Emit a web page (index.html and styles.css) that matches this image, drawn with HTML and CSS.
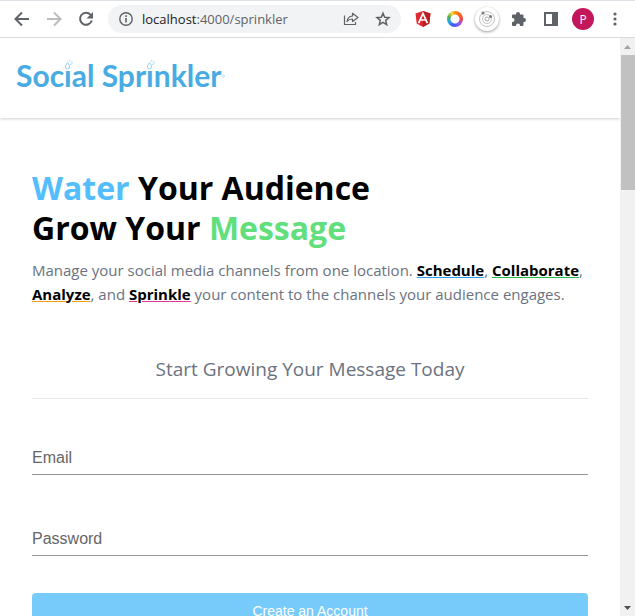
FILE: index.html
```html
<!DOCTYPE html>
<html lang="en">
<head>
  <meta charset="UTF-8">
  <meta name="viewport" content="width=device-width, initial-scale=1.0">
  <title>Social Sprinkler</title>
  <link rel="stylesheet" href="styles.css">
</head>
<body>
  <div class="toolbar">
    <button class="tool" type="button" aria-label="Back">
      <svg width="16" height="16" viewBox="0 0 16 16" fill="none" stroke="#5f6368" stroke-width="2"><path d="M15 8H2M8 1.5L1.5 8L8 14.5"/></svg>
    </button>
    <button class="tool" type="button" aria-label="Forward">
      <svg width="16" height="16" viewBox="0 0 16 16" fill="none" stroke="#babcbe" stroke-width="2"><path d="M1 8h13M8 1.5L14.5 8L8 14.5"/></svg>
    </button>
    <button class="tool" type="button" aria-label="Reload">
      <svg width="16" height="16" viewBox="0 0 16 16"><path d="M12.6 3.8A6 6 0 1 0 13.8 9.500" fill="none" stroke="#5f6368" stroke-width="2"/><path d="M15 1v6.500H8.500z" fill="#5f6368"/></svg>
    </button>
    <div class="address">
      <svg width="16" height="16" viewBox="0 0 16 16" fill="none" stroke="#5f6368"><circle cx="8" cy="8" r="6.200" stroke-width="1.400"/><path d="M8 7v4.500M8 4.300v1.600" stroke-width="1.600"/></svg>
      <span class="url"><span class="host">localhost</span>:4000/sprinkler</span>
      <button class="tool" type="button" aria-label="Share">
        <svg width="16" height="16" viewBox="0 0 16 16" fill="none" stroke="#5f6368" stroke-width="1.200"><path d="M1.500 4.500v9h11V11"/><path d="M4 10.500C4.500 7 6.500 5.300 9.500 5V2.300L15 6.500L9.500 10.500V8C7 8 5.300 8.800 4 10.500z" stroke-linejoin="round"/></svg>
      </button>
      <button class="tool" type="button" aria-label="Bookmark">
        <svg width="16" height="16" viewBox="0 0 16 16" fill="none" stroke="#5f6368" stroke-width="1.500"><path d="M8 2.200l1.700 4 4.300.4-3.300 2.800 1 4.300L8 11.400l-3.700 2.300 1-4.300L2 6.600l4.300-.4z"/></svg>
      </button>
    </div>
    <div class="extensions">
      <button class="tool" type="button" aria-label="Angular DevTools">
        <svg width="16" height="16" viewBox="0 0 16 16"><path d="M8 0l7.500 2.600-1.200 10L8 16l-6.300-3.400-1.200-10z" fill="#dd2c31"/><path d="M8 0l7.500 2.600-1.200 10L8 16z" fill="#b92025"/><path d="M3.600 12.200L8 2.500l4.400 9.700M5.600 9h4.800" fill="none" stroke="#fff" stroke-width="1.700"/></svg>
      </button>
      <button class="tool" type="button" aria-label="Color picker"><span class="color-ring"></span></button>
      <button class="tool round" type="button" aria-label="Orbit">
        <svg width="18" height="18" viewBox="0 0 18 18" fill="none" stroke="#c2c4c6"><circle cx="9" cy="9" r="7.500"/><circle cx="9" cy="9" r="4.500"/><circle cx="9" cy="9" r="2" stroke="#aaa"/><circle cx="5" cy="3" r="1.500" fill="#777" stroke="none"/><circle cx="12.500" cy="6.500" r="1.500" fill="#777" stroke="none"/></svg>
      </button>
      <button class="tool" type="button" aria-label="Extensions">
        <svg width="16" height="16" viewBox="0 0 16 16"><path d="M1 4.500Q1 3.500 2 3.500H5V3a2 2 0 0 1 4 0v.5h2.500q1 0 1 1V7h.5a2 2 0 0 1 0 4h-.5v3q0 1-1 1H9v-.5a1.800 1.800 0 0 0-4 0v.5H2q-1 0-1-1v-3h.5a1.800 1.800 0 0 0 0-4H1z" fill="#5f6368"/></svg>
      </button>
      <button class="tool" type="button" aria-label="Side panel">
        <svg width="16" height="16" viewBox="0 0 16 16"><path d="M1 1h14v14H1zM3 3v10h6V3z" fill="#5f6368" fill-rule="evenodd"/></svg>
      </button>
      <button class="avatar" type="button">P</button>
      <button class="tool" type="button" aria-label="Menu">
        <svg width="16" height="16" viewBox="0 0 16 16" fill="#5f6368"><circle cx="8" cy="3" r="1.600"/><circle cx="8" cy="8" r="1.600"/><circle cx="8" cy="13" r="1.600"/></svg>
      </button>
    </div>
  </div>

  <div class="window">
    <div class="page">
      <header class="header">
        <a class="logo" href="#">Soc<span class="drip">i<svg width="10" height="11" viewBox="0 0 10 11"><path d="M0 3h7v8H0z" fill="#fff"/><path d="M3.500 3.500C2 5.500 1.500 6.500 1.500 8a2 2 0 0 0 4 0C5.500 6.500 5 5.500 3.500 3.500zM5 2.500l1-1.500M7 3.500L8.500 2M6.500 5.500l2-1" fill="none" stroke="#93d0f0"/></svg></span>al Spr<span class="drip">i<svg width="10" height="11" viewBox="0 0 10 11"><path d="M0 3h7v8H0z" fill="#fff"/><path d="M3.500 3.500C2 5.500 1.500 6.500 1.500 8a2 2 0 0 0 4 0C5.500 6.500 5 5.500 3.500 3.500zM5 2.500l1-1.500M7 3.500L8.500 2M6.500 5.500l2-1" fill="none" stroke="#93d0f0"/></svg></span>nkler</a>
        <svg width="4" height="6" viewBox="0 0 4 6" fill="none" stroke="#b5dff5"><path d="M0 1l1 1"/><circle cx="2.500" cy="4" r="1"/></svg>
      </header>
      <main class="content">
        <h1><span class="blue">Water</span> Your Audience<br>Grow Your <span class="green">Message</span></h1>
        <p class="intro">Manage your social media channels from one location. <b class="schedule">Schedule</b>, <b class="collaborate">Collaborate</b>, <b class="analyze">Analyze</b>, and <b class="sprinkle">Sprinkle</b> your content to the channels your audience engages.</p>
        <h2>Start Growing Your Message Today</h2>
        <form class="signup">
          <div class="field">
            <label for="email">Email</label>
            <input type="email" id="email">
          </div>
          <div class="field">
            <label for="password">Password</label>
            <input type="password" id="password">
          </div>
          <button class="submit" type="submit">Create an Account</button>
        </form>
      </main>
    </div>
    <div class="scrollbar">
      <svg width="15" height="17" viewBox="0 0 15 17"><path d="M4 11l3.500-4 3.500 4z" fill="#a3a3a3"/></svg>
      <div class="thumb"></div>
      <svg class="down" width="15" height="17" viewBox="0 0 15 17"><path d="M4 7l3.500 4L11 7z" fill="#505050"/></svg>
    </div>
  </div>
</body>
</html>
```
FILE: styles.css
```css
* { box-sizing: border-box; }
body { margin: 0; height: 100vh; display: flex; flex-direction: column; overflow: hidden; background: #fff; font-family: "Open Sans", "Noto Sans", sans-serif; }
button { border: none; background: none; padding: 0; font-family: inherit; cursor: pointer; }
svg { display: block; }

/* browser bar */
.toolbar { display: flex; align-items: center; flex: none; height: 38px; padding: 0 12px 0 14px; gap: 16px; border-top: 1px solid #dee1e6; border-bottom: 1px solid #d9dbde; }
.tool { display: flex; align-items: center; justify-content: center; width: 16px; height: 16px; flex: none; }
.address { display: flex; align-items: center; flex: 1; min-width: 0; height: 28px; margin-left: -2px; padding: 0 10px; gap: 16px; border-radius: 14px; background: #f1f3f4; }
.url { flex: 1; margin-left: -8px; font-size: 13px; color: #5f6368; white-space: nowrap; }
.host { color: #202124; }
.extensions { display: flex; align-items: center; gap: 16px; margin-left: -2px; }
.color-ring { width: 16px; height: 16px; border-radius: 50%; background: radial-gradient(circle, #fff 4px, transparent 5px), conic-gradient(#fb8c00, #f4433c 25%, #8e5cf0 38%, #3d5afe 55%, #26a6e8 68%, #4caf50 80%, #fdd835 92%, #fb8c00); }
.round { width: 24px; height: 24px; margin: 0 -4px; border-radius: 50%; background: #fff; box-shadow: 0 1px 3px rgba(0, 0, 0, 0.4); }
.avatar { width: 22px; height: 22px; margin: 0 -3px; border-radius: 50%; background: #c2185b; color: #fff; font-size: 12px; }

.window { display: flex; flex: 1; min-height: 0; }
.page { flex: 1; min-width: 0; overflow: hidden; }
.scrollbar { display: flex; flex-direction: column; width: 15px; background: #f1f1f1; }
.thumb { height: 135px; margin: 0 0 0 1px; background: #c1c1c1; }
.down { margin-top: auto; }

.header { display: flex; align-items: center; height: 80px; padding: 0 16px 6px; box-shadow: 0 1px 3px rgba(0, 0, 0, 0.2); }
.logo { color: #48ace2; font-family: Lato, sans-serif; font-size: 30px; font-weight: bold; line-height: 40px; text-decoration: none; }
.drip { position: relative; }
.drip svg { position: absolute; left: 0; top: 2px; }

.content { padding: 50px 32px; }
h1 { margin: 0; font-size: 32px; line-height: 40px; font-weight: bold; color: #000; }
.blue { color: #54bdfc; }
.green { color: #62df7c; }
.intro { margin: 10px 0 0; font-size: 15px; line-height: 24px; color: #6b7280; }
.intro b { color: #000; text-decoration: underline; text-decoration-thickness: 1px; }
.intro .schedule { text-decoration-color: #2f9bf0; }
.intro .collaborate { text-decoration-color: #22b84c; }
.intro .analyze { text-decoration-color: #f59e0b; }
.intro .sprinkle { text-decoration-color: #e0359a; }
h2 { margin: 48px 0 0; padding-bottom: 14px; border-bottom: 1px solid #e5e7eb; font-size: 19px; line-height: 30px; font-weight: normal; color: #6b7280; text-align: center; }

.signup { padding-top: 40px; font-family: "Liberation Sans", Arial, sans-serif; }
.field { display: grid; height: 36px; margin-bottom: 45px; border-bottom: 1px solid #949494; }
.field label, .field input { grid-area: 1 / 1; }
.field label { font-size: 16px; line-height: 38px; color: #666; }
.field input { width: 100%; border: none; background: transparent; outline: none; font-size: 16px; }
.submit { display: block; width: 100%; height: 36px; margin-top: -8px; border-radius: 4px; background: #77cbfb; color: #fff; font-size: 14px; }
.signup .submit { font-family: "Liberation Sans", Arial, sans-serif; }
```
